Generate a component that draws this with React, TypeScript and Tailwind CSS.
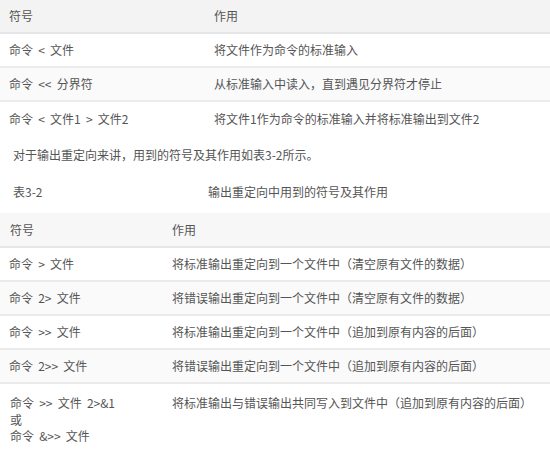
const font = { fontFamily: '"Noto Sans CJK SC", "Noto Sans", sans-serif' };

const inputRows = [
  ["命令 < 文件", "将文件作为命令的标准输入"],
  ["命令 << 分界符", "从标准输入中读入，直到遇见分界符才停止"],
  ["命令 < 文件1 > 文件2", "将文件1作为命令的标准输入并将标准输出到文件2"],
];

const outputRows = [
  ["命令 > 文件", "将标准输出重定向到一个文件中（清空原有文件的数据）"],
  ["命令 2> 文件", "将错误输出重定向到一个文件中（清空原有文件的数据）"],
  ["命令 >> 文件", "将标准输出重定向到一个文件中（追加到原有内容的后面）"],
  ["命令 2>> 文件", "将错误输出重定向到一个文件中（追加到原有内容的后面）"],
];

function Row({ a, b, col, alt }: { a: string; b: string; col: string; alt?: boolean }) {
  return (
    <div className={`flex h-[34px] items-center border-b-2 border-[#ebebeb] ${alt ? "bg-[#fafafa]" : "bg-white"}`}>
      <div className={`${col} shrink-0 pl-[9px] [word-spacing:2.5px]`}>{a}</div>
      <div>{b}</div>
    </div>
  );
}

export default function App() {
  return (
    <div className="w-[550px] h-[449px] overflow-hidden bg-white text-[12px] text-[#555]" style={font}>
      <div>
        <div className="flex h-[34px] items-center border-b-2 border-[#e6e6e6] bg-[#f3f3f3]">
          <div className="w-[214px] shrink-0 pl-[9px]">符号</div>
          <div>作用</div>
        </div>
        {inputRows.map((r, i) => (
          <div
            key={i}
            className={`flex h-[34px] items-center ${i < 2 ? "border-b-2 border-[#ebebeb]" : ""} ${i === 1 ? "bg-[#fafafa]" : "bg-white"}`}
          >
            <div className="w-[214px] shrink-0 pl-[9px] [word-spacing:2.5px]">{r[0]}</div>
            <div>{r[1]}</div>
          </div>
        ))}
      </div>

      <p className="mt-[10px] pl-[13px] leading-[18px]">对于输出重定向来讲，用到的符号及其作用如表3-2所示。</p>
      <div className="mt-[19px] flex leading-[18px]">
        <div className="w-[208px] shrink-0 pl-[13px]">表3-2</div>
        <div>输出重定向中用到的符号及其作用</div>
      </div>

      <div className="mt-[12px]">
        <div className="flex h-[35px] items-center border-b-2 border-[#e6e6e6] bg-[#f7f7f7]">
          <div className="w-[172px] shrink-0 pl-[10px]">符号</div>
          <div>作用</div>
        </div>
        {outputRows.map((r, i) => (
          <Row key={i} a={r[0]} b={r[1]} col="w-[172px]" alt={i % 2 === 1} />
        ))}
        <div className="flex pt-[11px] leading-[16.5px]">
          <div className="w-[172px] shrink-0 pl-[10px] [word-spacing:2.5px]">
            <div>命令 &gt;&gt; 文件 2&gt;&amp;1</div>
            <div>或</div>
            <div>命令 &amp;&gt;&gt; 文件</div>
          </div>
          <div>将标准输出与错误输出共同写入到文件中（追加到原有内容的后面）</div>
        </div>
      </div>
    </div>
  );
}
